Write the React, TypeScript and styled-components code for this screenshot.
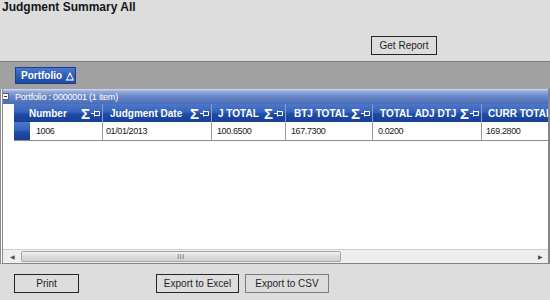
import React from 'react'
import styled, { createGlobalStyle } from 'styled-components'

const GlobalStyle = createGlobalStyle`
    html, body {
        margin: 0;
        padding: 0;
        background: #dcdddc;
    }
    body {
        font-family: "Liberation Sans", Arial, sans-serif;
    }
`

const Page = styled.div`
    width: 550px;
    height: 300px;
    overflow: hidden;
    display: flex;
    flex-direction: column;
    background: #dcdddc;
`

const Title = styled.h1`
    margin: 0;
    height: 16px;
    box-sizing: border-box;
    padding: 0 0 0 2px;
    font-size: 12px;
    line-height: 14px;
    font-weight: bold;
    color: #151518;
`

const ReportBar = styled.div`
    height: 45px;
    box-sizing: border-box;
    padding: 19px 0 0 371px;
`

const Button = styled.button<{ $w: number; $soft?: boolean }>`
    width: ${({ $w }) => $w}px;
    height: 19px;
    padding: 0;
    margin: 0;
    box-sizing: border-box;
    background: #dcdddc;
    border: 1px solid ${({ $soft }) => ($soft ? '#7c7c7c' : '#262626')};
    font-family: "Liberation Sans", Arial, sans-serif;
    font-size: 10px;
    color: #1e1e2a;
`

const GroupPanel = styled.div`
    height: 28px;
    box-sizing: border-box;
    border-top: 1px solid #7a7a7a;
    background: #a1a1a1;
    padding: 5px 0 0 15px;
`

const Chip = styled.div`
    width: 61px;
    height: 17px;
    box-sizing: border-box;
    display: flex;
    align-items: center;
    padding-left: 5px;
    gap: 4px;
    border: 1px solid #1d3f8e;
    background: linear-gradient(#4a78cc, #2a5bb8 55%, #1e4aa2);
    color: #fff;
    font-size: 10px;
    font-weight: bold;
`

const Grid = styled.div`
    height: 175px;
    box-sizing: border-box;
    display: flex;
    flex-direction: column;
    overflow: hidden;
    background: #fff;
    border: 1px solid #858585;
    border-top: none;
    border-left: 3px double #8a8a8a;
    border-right-width: 2px;
`

const GroupRow = styled.div`
    height: 15px;
    flex: none;
    display: flex;
    align-items: center;
    gap: 6px;
    margin-left: -2px;
    padding-left: 1px;
    background: linear-gradient(#d5def2 0, #94abdc 15%, #6a88c8 50%, #4b6bb4 100%);
    color: #ffffff;
    font-size: 9px;
    letter-spacing: -0.2px;
    white-space: nowrap;
`

const Collapse = styled.span`
    width: 7px;
    height: 7px;
    box-sizing: border-box;
    display: flex;
    align-items: center;
    justify-content: center;
    background: #fff;
    border: 1px solid #5a5a6a;

    &::after {
        content: '';
        width: 3px;
        height: 1px;
        background: #303040;
    }
`

const HeaderRow = styled.div`
    height: 18px;
    flex: none;
    display: flex;
    margin-left: 11px;
    background: linear-gradient(#4d78c8 0, #3462bd 45%, #1f4ca8 55%, #173f94 100%);
    white-space: nowrap;
`

const HeaderCell = styled.div<{ $w: number; $pad: number }>`
    width: ${({ $w }) => $w}px;
    flex: none;
    box-sizing: border-box;
    display: flex;
    align-items: center;
    padding-left: ${({ $pad }) => $pad}px;
    padding-right: 2px;
    border-right: 1px solid #8a9cc4;
    color: #fff;
    font-size: 10px;
    font-weight: bold;
`

const HeaderTools = styled.span`
    margin-left: auto;
    display: flex;
    align-items: center;
    gap: 1px;
`

const Sigma = styled.span`
    font-size: 15px;
    font-weight: bold;
    line-height: 1;
`

const DataRow = styled.div`
    height: 18px;
    flex: none;
    display: flex;
    margin-left: 11px;
    border-bottom: 1px solid #8c8c8c;
    white-space: nowrap;
`

const Indicator = styled.div`
    width: 16px;
    flex: none;
    background: linear-gradient(#4d78c8 0, #3462bd 45%, #1f4ca8 55%, #173f94 100%);
`

const DataCell = styled.div<{ $w: number; $pad: number }>`
    width: ${({ $w }) => $w}px;
    flex: none;
    box-sizing: border-box;
    display: flex;
    align-items: center;
    padding-left: ${({ $pad }) => $pad}px;
    border-right: 1px solid #9a9a9a;
    font-size: 9px;
    letter-spacing: -0.4px;
    color: #202020;
`

const Filler = styled.div`
    flex: 1;
`

const Scrollbar = styled.div`
    height: 13px;
    flex: none;
    display: flex;
    align-items: stretch;
    background: #eeeeee;
    border-top: 1px solid #d0d0d0;
`

const Arrow = styled.div<{ $w: number }>`
    width: ${({ $w }) => $w}px;
    flex: none;
    display: flex;
    align-items: center;
    justify-content: center;
    color: #505050;
    font-size: 6px;
`

const Thumb = styled.div`
    width: 320px;
    flex: none;
    box-sizing: border-box;
    margin: 1px 0;
    display: flex;
    align-items: center;
    justify-content: center;
    border: 1px solid #a4a4a4;
    border-radius: 2px;
    background: linear-gradient(#f2f2f2, #dcdcdc 50%, #cfcfcf);
    color: #6a6a6a;
    font-size: 7px;
    letter-spacing: 0.5px;
`

const Track = styled.div`
    flex: 1;
`

const Footer = styled.div`
    height: 36px;
    box-sizing: border-box;
    display: flex;
    align-items: flex-start;
    gap: 6px;
    padding: 10px 0 0 14px;
`

const FooterGap = styled.span`
    width: 65px;
    flex: none;
`

const Pin = () => (
    <svg width="9" height="7" viewBox="0 0 9 7">
        <path d="M0 3.5H3.5M3.5 0.5V6.5M4 1.5H8.5V5.5H4" fill="none" stroke="#fff" strokeWidth="1" />
    </svg>
)

const columns = [
    { label: 'Number', w: 89, pad: 15 },
    { label: 'Judgment Date', w: 109, pad: 7 },
    { label: 'J TOTAL', w: 74, pad: 6 },
    { label: 'BTJ TOTAL', w: 87, pad: 8 },
    { label: 'TOTAL ADJ DTJ', w: 109, pad: 7 },
    { label: 'CURR TOTAL', w: 90, pad: 6 },
]

const row = [
    { value: '1006', w: 73, pad: 6 },
    { value: '01/01/2013', w: 109, pad: 3 },
    { value: '100.6500', w: 74, pad: 5 },
    { value: '167.7300', w: 87, pad: 5 },
    { value: '0.0200', w: 109, pad: 5 },
    { value: '169.2800', w: 90, pad: 4 },
]

export default function App() {
    return (
        <Page>
            <GlobalStyle />
            <Title>Judgment Summary All</Title>
            <ReportBar>
                <Button $w={66}>Get Report</Button>
            </ReportBar>
            <GroupPanel>
                <Chip>
                    Portfolio <span>△</span>
                </Chip>
            </GroupPanel>
            <Grid>
                <GroupRow>
                    <Collapse />
                    Portfolio : 0000001 (1 item)
                </GroupRow>
                <HeaderRow>
                    {columns.map((c) => (
                        <HeaderCell key={c.label} $w={c.w} $pad={c.pad}>
                            {c.label}
                            <HeaderTools>
                                <Sigma>Σ</Sigma>
                                <Pin />
                            </HeaderTools>
                        </HeaderCell>
                    ))}
                </HeaderRow>
                <DataRow>
                    <Indicator />
                    {row.map((c) => (
                        <DataCell key={c.value} $w={c.w} $pad={c.pad}>
                            {c.value}
                        </DataCell>
                    ))}
                </DataRow>
                <Filler />
                <Scrollbar>
                    <Arrow $w={18}>◀</Arrow>
                    <Thumb>III</Thumb>
                    <Track />
                    <Arrow $w={16}>▶</Arrow>
                </Scrollbar>
            </Grid>
            <Footer>
                <Button $w={65}>Print</Button>
                <FooterGap />
                <Button $w={83}>Export to Excel</Button>
                <Button $w={84} $soft>
                    Export to CSV
                </Button>
            </Footer>
        </Page>
    )
}
